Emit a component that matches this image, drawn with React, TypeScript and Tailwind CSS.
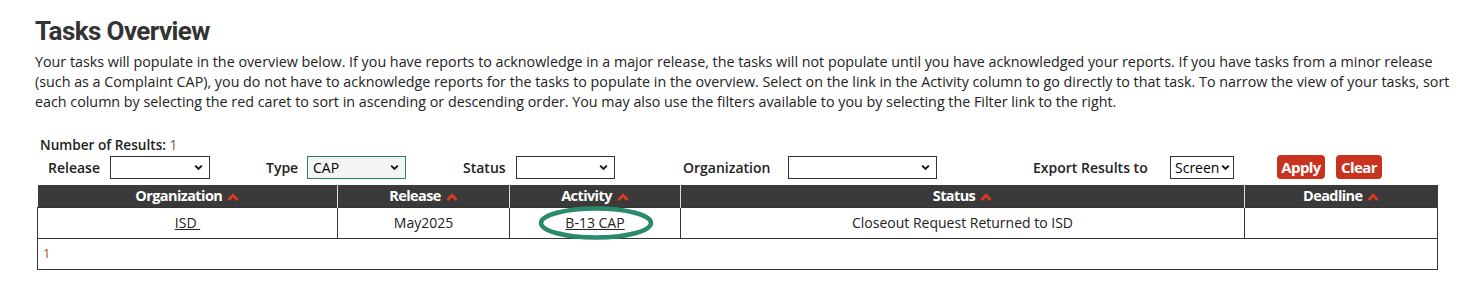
import React from 'react';

const font = { fontFamily: '"Open Sans", "Liberation Sans", sans-serif' };

function Caret() {
  return (
    <svg viewBox="0 0 12 8" className="ml-[5px] inline-block h-[8px] w-[12px] align-middle">
      <path d="M1.5 7 L6 2.2 L10.5 7" fill="none" stroke="#e0391f" strokeWidth="2.8" />
    </svg>
  );
}

function Select({ width, value, type }: { width: string; value?: string; type?: boolean }) {
  return (
    <div className={`relative h-[23px] ${width}`}>
      <div
        className={`flex h-full w-full items-center border pl-[5px] text-[14px] font-normal text-black ${
          type ? 'border-[#2f7d64] bg-[#f4f4f4]' : 'border-[#333] bg-white'
        }`}
      >
        {value}
      </div>
      <svg viewBox="0 0 10 8" className="absolute right-[7px] top-[8px] h-[7px] w-[9px]">
        <path d="M1.2 1.8 L5 5.6 L8.8 1.8" fill="none" stroke="#111" strokeWidth="2.2" />
      </svg>
    </div>
  );
}

export default function App() {
  const headers = [
    { label: 'Organization', w: 'w-[300px]' },
    { label: 'Release', w: 'w-[172px]' },
    { label: 'Activity', w: 'w-[171px]' },
    { label: 'Status', w: 'w-[564px]' },
    { label: 'Deadline', w: 'w-[193px]' },
  ];

  return (
    <div className="h-[286px] w-[1467px] bg-white pl-[35px] pt-[14px] text-[#333]" style={font}>
      <h1
        className="text-[26px] font-bold leading-[34px] tracking-[-0.6px] text-[#333]"
        style={{ fontFamily: 'Roboto, "Liberation Sans", sans-serif' }}
      >
        Tasks Overview
      </h1>
      <p className="mt-[4px] w-[1425px] text-[14.3px] leading-[20px] text-[#222]">
        Your tasks will populate in the overview below. If you have reports to acknowledge in a major release, the tasks
        will not populate until you have acknowledged your reports. If you have tasks from a minor release (such as a
        Complaint CAP), you do not have to acknowledge reports for the tasks to populate in the overview. Select on the
        link in the Activity column to go directly to that task. To narrow the view of your tasks, sort each column by
        selecting the red caret to sort in ascending or descending order. You may also use the filters available to you
        by selecting the Filter link to the right.
      </p>

      <div className="mt-[24px] pl-[5px] text-[13.6px] leading-[18px]">
        <span className="font-semibold text-[#222]">Number of Results:</span>{' '}
        <span className="text-[#6b5a4a]">1</span>
      </div>

      {/* Filter row */}
      <div className="mt-[1px] flex h-[24px] items-center text-[14px] font-semibold text-[#222]">
        <span className="ml-[13px] w-[62px]">Release</span>
        <Select width="w-[100px]" />
        <span className="ml-[56px] w-[41px]">Type</span>
        <Select width="w-[99px]" value="CAP" type />
        <span className="ml-[57px] w-[53px]">Status</span>
        <Select width="w-[99px]" />
        <span className="ml-[68px] w-[105px]">Organization</span>
        <Select width="w-[149px]" />
        <span className="ml-[96px] w-[137px]">Export Results to</span>
        <div className="relative h-[23px] w-[64px]">
          <div className="flex h-full items-center border border-[#333] bg-white pl-[4px] text-[14px] font-normal text-black">
            Screen
          </div>
          <svg viewBox="0 0 10 8" className="absolute right-[4px] top-[8px] h-[7px] w-[9px]">
            <path d="M1.2 1.8 L5 5.6 L8.8 1.8" fill="none" stroke="#111" strokeWidth="2.2" />
          </svg>
        </div>
        <button className="ml-[43px] h-[24px] w-[48px] rounded-[4px] bg-[#c9321f] text-[15px] font-bold tracking-[-0.6px] text-white">
          Apply
        </button>
        <button className="ml-[11px] h-[24px] w-[46px] rounded-[4px] bg-[#c9321f] text-[15px] font-bold tracking-[-0.6px] text-white">
          Clear
        </button>
      </div>

      {/* Results table */}
      <table className="ml-[2px] mt-[6px] w-[1400px] table-fixed border-collapse text-[14px]">
        <thead>
          <tr className="h-[22px] bg-[#3a3a3a]">
            {headers.map((h, i) => (
              <th
                key={h.label}
                className={`${h.w} p-0 text-center text-[14.5px] font-bold tracking-[-0.6px] text-white ${
                  i < headers.length - 1 ? 'border-r border-r-[#ddd]' : ''
                }`}
              >
                {h.label}
                <Caret />
              </th>
            ))}
          </tr>
        </thead>
        <tbody>
          <tr className="h-[31px]">
            <td className="border border-[#333] text-center text-[#222]">
              <a href="#" className="underline">
                ISD&nbsp;
              </a>
            </td>
            <td className="border border-[#333] text-center text-[#222]">May2025</td>
            <td className="relative border border-[#333] text-center text-[#222]">
              <a href="#" className="underline">
                B-13 CAP
              </a>
              <svg viewBox="0 0 116 34" className="pointer-events-none absolute left-[28px] top-[-2px] h-[34px] w-[116px]">
                <ellipse cx="58" cy="17" rx="55" ry="14.5" fill="none" stroke="#2a8a6c" strokeWidth="4.5" />
              </svg>
            </td>
            <td className="border border-[#333] text-center text-[#222]">Closeout Request Returned to ISD</td>
            <td className="border border-[#333]"></td>
          </tr>
          <tr className="h-[31px]">
            <td colSpan={5} className="border border-[#333] pl-[5px] text-left text-[13px] text-[#b5532e]">
              1
            </td>
          </tr>
        </tbody>
      </table>
    </div>
  );
}
